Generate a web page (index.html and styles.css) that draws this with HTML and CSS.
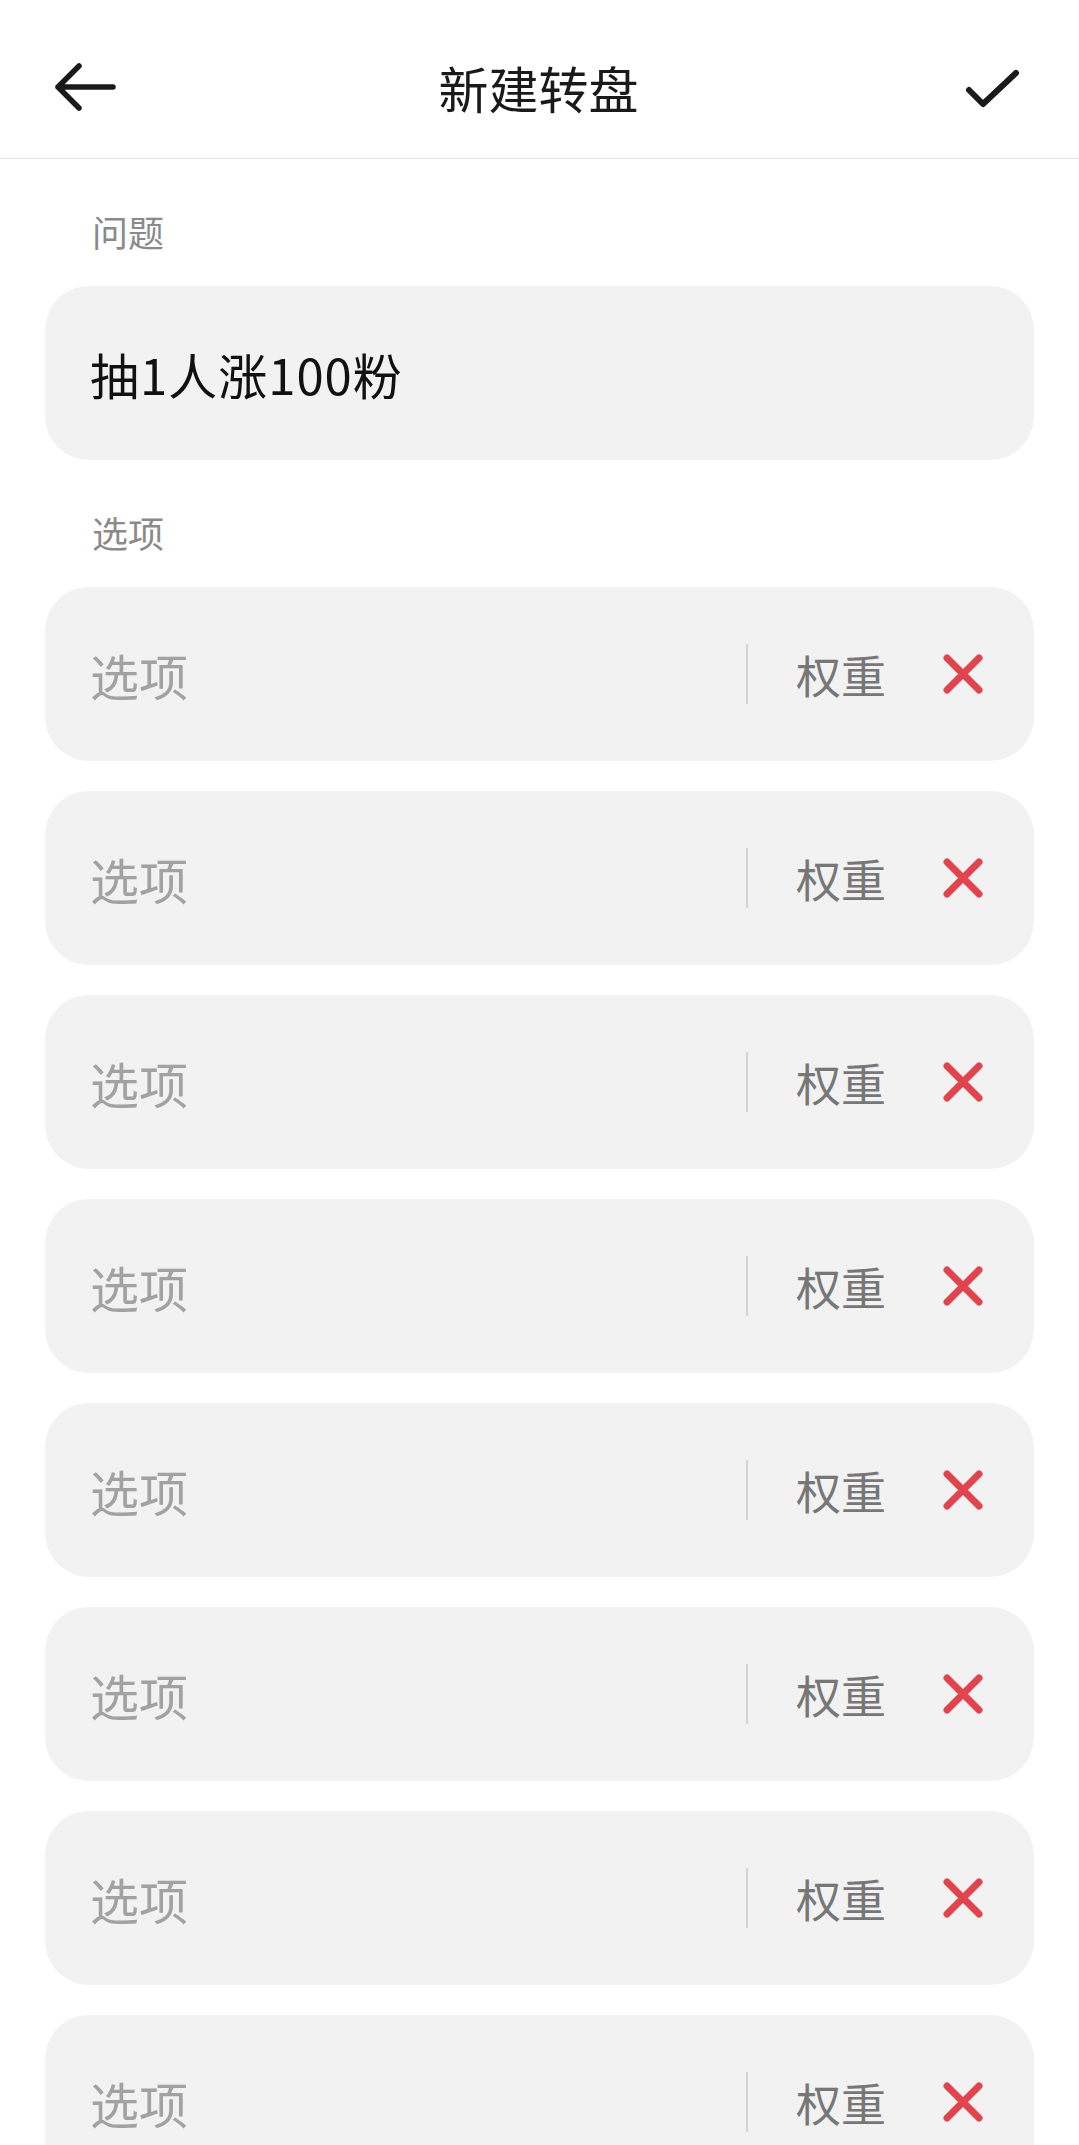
FILE: index.html
```html
<!DOCTYPE html>
<html lang="zh-CN">
<head>
    <meta charset="UTF-8">
    <meta name="viewport" content="width=device-width, initial-scale=1.0">
    <title>新建转盘</title>
    <link rel="stylesheet" href="styles.css">
</head>
<body>

    <div class="page">
        <header class="topbar">
            <button class="icon-btn" aria-label="返回">
                <svg width="64" height="64" viewBox="0 0 64 64">
                    <path d="M60 32H5M26 11L5 32l21 21" fill="none" stroke="#1a1a1a" stroke-width="5.5" stroke-linecap="round" stroke-linejoin="round"/>
                </svg>
            </button>
            <h1>新建转盘</h1>
            <button class="icon-btn" aria-label="完成">
                <svg width="64" height="64" viewBox="0 0 64 64">
                    <path d="M9 35l14 14L56 18" fill="none" stroke="#1a1a1a" stroke-width="6" stroke-linecap="round" stroke-linejoin="round"/>
                </svg>
            </button>
        </header>

        <main class="content">
            <div class="label">问题</div>
            <div class="field question-field">
                <input class="question" type="text" value="抽1人涨100粉">
            </div>

            <div class="label">选项</div>
            <div id="optionList"></div>
        </main>
    </div>

    <script>
        // Build the option rows
        let optionList = document.getElementById("optionList");

        for (let i = 0; i < 8; i++) {
            let row = document.createElement("div");
            row.className = "field option-row";
            row.innerHTML =
                '<input class="option-name" type="text" placeholder="选项">' +
                '<span class="divider"></span>' +
                '<input class="option-weight" type="text" placeholder="权重">' +
                '<button class="remove-btn" aria-label="删除">' +
                    '<svg width="46" height="46" viewBox="0 0 46 46">' +
                        '<path d="M7 7L39 39M39 7L7 39" fill="none" stroke="#e0454f" stroke-width="7" stroke-linecap="round"/>' +
                    '</svg>' +
                '</button>';
            optionList.appendChild(row);
        }
    </script>

</body>
</html>
```

FILE: styles.css
```css
body {
    margin: 0;
    font-family: "Noto Sans CJK SC", "Noto Sans", sans-serif;
    background: #ffffff;
    color: #1a1a1a;
}

.page {
    height: 100vh;
    overflow: hidden;
}

.topbar {
    display: flex;
    align-items: center;
    justify-content: space-between;
    height: 142px;
    padding: 16px 55px 0 53px;
    border-bottom: 1px solid #e2e2e2;
}

.topbar h1 {
    margin: 0;
    font-size: 50px;
    font-weight: 400;
    line-height: 64px;
    color: #1a1a1a;
}

.icon-btn, .remove-btn {
    display: flex;
    padding: 0;
    border: none;
    background: none;
    cursor: pointer;
}

.label {
    padding: 50px 0 33px 92px;
    font-size: 36px;
    line-height: 44px;
    color: #8a8a8a;
}

.field {
    display: flex;
    align-items: center;
    height: 174px;
    margin: 0 45px 30px;
    padding: 0 48px 0 45px;
    background: #f2f2f2;
    border-radius: 44px;
}

.question-field {
    margin-bottom: 0;
}

input {
    padding: 0;
    border: none;
    outline: none;
    background: transparent;
    font-family: inherit;
}

.question {
    flex: 1;
    font-size: 49px;
    letter-spacing: 1px;
    color: #111111;
}

.option-name {
    flex: 1;
    min-width: 0;
    font-size: 49px;
    color: #111111;
}

.option-name::placeholder {
    color: #a2a2a2;
}

.divider {
    width: 2px;
    height: 60px;
    background: #d4d4d4;
}

.option-weight {
    width: 92px;
    margin: 0 52px 0 48px;
    font-size: 45px;
}

.option-weight::placeholder {
    color: #777777;
}
```
